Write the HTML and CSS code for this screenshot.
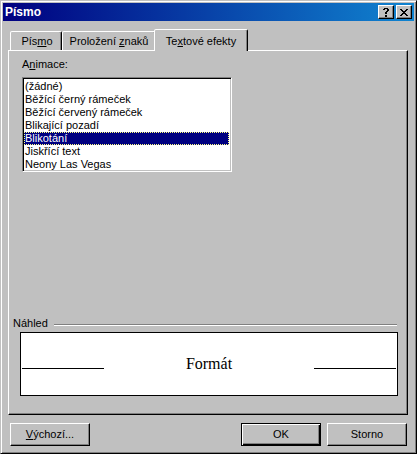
FILE: index.html
```html
<!DOCTYPE html>
<html lang="cs">
<head>
<meta charset="utf-8">
<title>Písmo</title>
<link rel="stylesheet" href="styles.css">
</head>
<body>
<div class="window">
  <div class="titlebar">
    <span class="title">Písmo</span>
    <div class="tbtns">
      <div class="tbtn" title="Nápověda">
        <svg width="6" height="9" viewBox="0 0 6 9" shape-rendering="crispEdges"><path d="M1 0h4v1h-4zM0 1h2v1h-2zM4 1h2v2h-2zM3 3h2v1h-2zM2 4h2v2h-2zM2 7h2v2h-2z" fill="#000"/></svg>
      </div>
      <div class="tbtn" title="Zavřít">
        <svg width="8" height="7" viewBox="0 0 8 7" shape-rendering="crispEdges"><path d="M0 0h2v1h-2zM6 0h2v1h-2zM1 1h2v1h-2zM5 1h2v1h-2zM2 2h4v1h-4zM3 3h2v1h-2zM2 4h4v1h-4zM1 5h2v1h-2zM5 5h2v1h-2zM0 6h2v1h-2zM6 6h2v1h-2z" fill="#000"/></svg>
      </div>
    </div>
  </div>
  <div class="body">
    <div class="tabs">
      <div class="tab t1">Pís<u>m</u>o</div>
      <div class="tab t2">Proložení <u>z</u>naků</div>
      <div class="tab sel">Te<u>x</u>tové efekty</div>
    </div>
    <div class="panel">
      <div class="anim">
        <div class="label">A<u>n</u>imace:</div>
        <div class="listbox">
          <div class="item">(žádné)</div>
          <div class="item">Běžící černý rámeček</div>
          <div class="item">Běžící červený rámeček</div>
          <div class="item">Blikající pozadí</div>
          <div class="item selected">Blikotání</div>
          <div class="item">Jiskřící text</div>
          <div class="item">Neony Las Vegas</div>
        </div>
      </div>
      <div class="group-head">
        <span class="group-label">Náhled</span>
        <span class="etch"></span>
      </div>
      <div class="preview">
        <span class="pline"></span>
        <span class="ptext">Formát</span>
        <span class="pline"></span>
      </div>
    </div>
    <div class="buttons">
      <div class="btn"><span><u>V</u>ýchozí...</span></div>
      <div class="spacer"></div>
      <div class="btn default"><span>OK</span></div>
      <div class="btn"><span>Storno</span></div>
    </div>
  </div>
</div>
</body>
</html>
```
FILE: styles.css
```css
* { box-sizing: border-box; }
html, body { margin: 0; padding: 0; }
body {
  background: #c0c0c0;
  font: 11px "Liberation Sans", Arial, sans-serif;
  color: #000;
}
u { text-decoration: underline; text-underline-offset: 1px; }

.window {
  width: 417px;
  height: 454px;
  background: #c0c0c0;
  border: 1px solid;
  border-color: #c0c0c0 #000 #000 #c0c0c0;
  box-shadow: inset 1px 1px #fff, inset -1px -1px #808080;
  padding: 2px;
  display: flex;
  flex-direction: column;
}

.titlebar {
  height: 18px;
  flex: none;
  display: flex;
  align-items: center;
  justify-content: space-between;
  background: linear-gradient(to right, #000080, #1084d0);
  color: #fff;
  font-weight: bold;
  font-size: 12px;
  padding: 0 2px 0 2px;
}
.title { line-height: 14px; }
.tbtns { display: flex; gap: 2px; }
.tbtn {
  width: 16px;
  height: 14px;
  background: #c0c0c0;
  border: 1px solid;
  border-color: #fff #000 #000 #fff;
  box-shadow: inset -1px -1px #808080;
  display: flex;
  align-items: center;
  justify-content: center;
}
.tbtn svg { display: block; }

.body {
  flex: 1;
  display: flex;
  flex-direction: column;
  padding: 8px 6px 5px 5px;
}

.tabs {
  display: flex;
  align-items: flex-end;
  height: 21px;
  flex: none;
  padding-left: 2px;
}
.tab {
  height: 19px;
  border: 1px solid;
  border-bottom: none;
  border-color: #fff #000 transparent #fff;
  box-shadow: inset -1px 0 #808080;
  border-radius: 2px 2px 0 0;
  text-align: center;
  padding-top: 3px;
  line-height: 13px;
  white-space: nowrap;
  background: #c0c0c0;
}
.t1 { width: 52px; padding-left: 2px; }
.t2 { width: 94px; }
.tab.sel {
  width: 94px;
  height: 22px;
  margin: 0 -2px -1px -2px;
  padding-top: 5px;
  position: relative;
  z-index: 1;
}

.panel {
  height: 365px;
  flex: none;
  border: 1px solid;
  border-color: #fff #000 #000 #fff;
  box-shadow: inset -1px -1px #808080;
  display: flex;
  flex-direction: column;
  padding: 7px 9px 18px 4px;
}
.anim { margin-left: 9px; }
.label { line-height: 13px; margin-bottom: 6px; }
.listbox {
  width: 210px;
  height: 95px;
  background: #fff;
  border: 1px solid;
  border-color: #808080 #fff #fff #808080;
  box-shadow: inset 1px 1px #000, inset -1px -1px #c0c0c0;
  padding: 2px 2px 0 1px;
}
.item {
  height: 13px;
  line-height: 13px;
  padding-left: 1px;
  white-space: nowrap;
}
.item.selected {
  background: #000080;
  color: #fff;
  outline: 1px dotted #ffff80;
  outline-offset: -1px;
}

.group-head {
  margin-top: auto;
  display: flex;
  align-items: center;
  height: 13px;
  line-height: 13px;
}
.etch {
  flex: 1;
  height: 2px;
  border-top: 1px solid #808080;
  border-bottom: 1px solid #fff;
  margin: 2px 1px 0 6px;
}

.preview {
  margin: 2px 0 0 7px;
  height: 64px;
  background: #fff;
  border: 1px solid #000;
  display: flex;
  justify-content: space-between;
  align-items: flex-start;
  padding: 0 1px;
}
.pline {
  width: 82px;
  height: 1px;
  background: #000;
  margin-top: 35px;
}
.ptext {
  font: 16px "Liberation Serif", "Times New Roman", serif;
  line-height: 18px;
  margin-top: 22px;
}

.buttons {
  display: flex;
  margin-top: 8px;
  height: 23px;
  flex: none;
  padding-left: 2px;
  padding-right: 1px;
  gap: 6px;
}
.spacer { flex: 1; }
.btn {
  width: 80px;
  height: 23px;
  border: 1px solid;
  border-color: #fff #000 #000 #fff;
  box-shadow: inset -1px -1px #808080;
  display: flex;
  align-items: center;
  justify-content: center;
  line-height: 13px;
}
.btn.default {
  border: 1px solid #000;
  box-shadow: inset 1px 1px #fff, inset -1px -1px #000, inset -2px -2px #808080;
}
```
